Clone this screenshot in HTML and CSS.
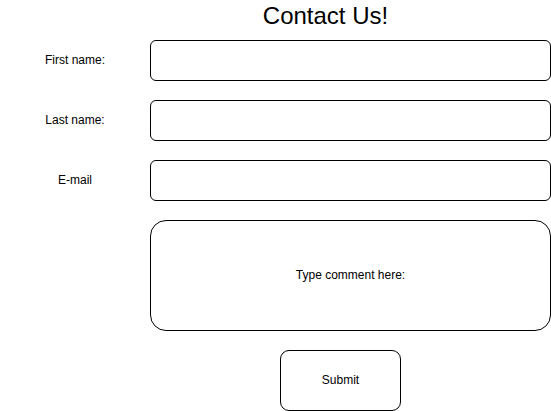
FILE: index.html
```html
<!DOCTYPE html>
<html>
<head>
<meta charset="utf-8">
<link rel="stylesheet" href="styles.css">
</head>
<body>
<header class="header"><h1 class="title">Contact Us!</h1></header>
<form class="form">
  <label class="label">First name:</label>
  <div class="field"></div>
  <label class="label">Last name:</label>
  <div class="field"></div>
  <label class="label">E-mail</label>
  <div class="field"></div>
  <div class="spacer"></div>
  <div class="comment">Type comment here:</div>
  <div class="spacer"></div>
  <div class="actions"><div class="submit">Submit</div></div>
</form>
</body>
</html>
```
FILE: styles.css
```css
html, body {
  margin: 0;
  padding: 0;
  background: #fff;
  color: #000;
  font-family: "Liberation Sans", Arial, sans-serif;
  overflow: hidden;
}
.header {
  height: 40px;
  padding-left: 100px;
  box-sizing: border-box;
}
.title {
  margin: 0;
  padding-top: 1px;
  font-size: 24px;
  font-weight: normal;
  line-height: 30px;
  text-align: center;
}
.form {
  display: grid;
  grid-template-columns: 150px 401px;
  grid-template-rows: 41px 41px 41px 111px 61px;
  row-gap: 19px;
  margin: 0;
}
.label {
  display: flex;
  align-items: center;
  justify-content: center;
  padding-bottom: 2px;
  font-size: 12px;
}
.field {
  box-sizing: border-box;
  border: 1px solid #000;
  border-radius: 6px;
}
.comment {
  box-sizing: border-box;
  border: 1px solid #000;
  border-radius: 16px;
  display: flex;
  align-items: center;
  justify-content: center;
  padding-bottom: 2px;
  font-size: 12px;
}
.actions {
  padding-left: 130px;
}
.submit {
  box-sizing: border-box;
  width: 121px;
  height: 61px;
  border: 1px solid #000;
  border-radius: 9px;
  display: flex;
  align-items: center;
  justify-content: center;
  padding-bottom: 2px;
  font-size: 12px;
}
```
